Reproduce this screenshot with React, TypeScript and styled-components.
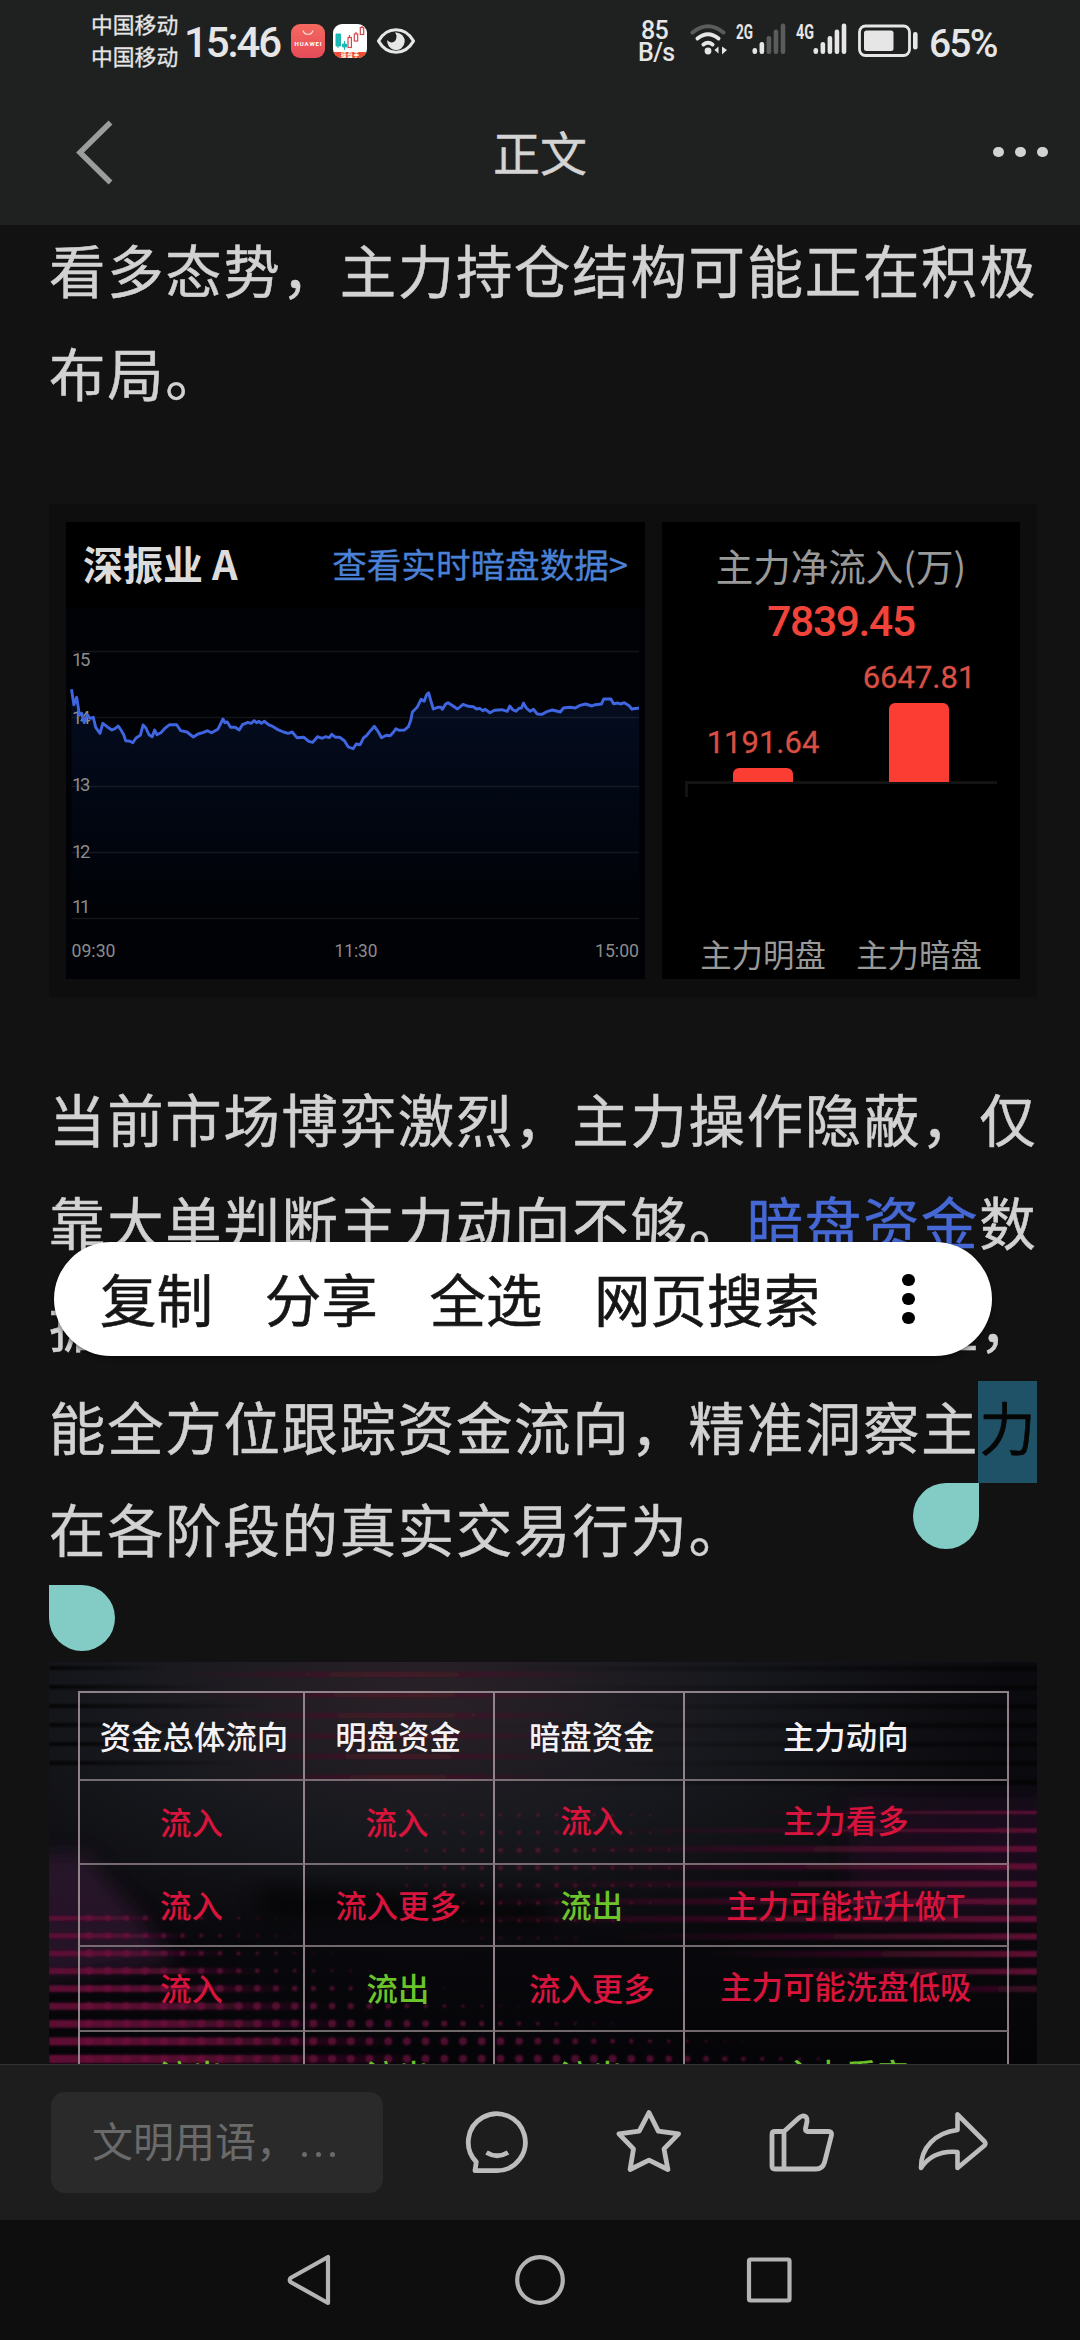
import React from "react";
import styled, { createGlobalStyle, css } from "styled-components";

const cjk = `"Noto Sans CJK SC", sans-serif`;
const latin = `Roboto, "Noto Sans CJK SC", sans-serif`;

const Global = createGlobalStyle`
  * { box-sizing: border-box; }
  body { margin: 0; background: #121212; font-family: ${cjk}; }
  svg { display: block; }
`;

const Screen = styled.div`
  position: relative;
  width: 1080px;
  height: 2340px;
  display: flex;
  flex-direction: column;
  overflow: hidden;
  background: #121212;
`;

/* ---------- header ---------- */

const Header = styled.header`
  flex: none;
  height: 225px;
  background: #1f2120;
  display: flex;
  flex-direction: column;
`;

const StatusBar = styled.div`
  height: 82px;
  display: flex;
  justify-content: space-between;
  padding: 0 85px 0 91px;
  color: #e6e6e6;
`;

const StatusSide = styled.div`
  display: flex;
  align-items: center;
  height: 82px;
`;

const Carriers = styled.div`
  display: flex;
  flex-direction: column;
  width: 93px;
  font-size: 21.8px;
  line-height: 32px;
  white-space: nowrap;
  padding-bottom: 3px;
  -webkit-text-stroke: 0.3px currentColor;
`;

const Clock = styled.div`
  width: 107px;
  font: 500 42px/50px ${latin};
  letter-spacing: -2.1px;
  padding-top: 4px;
`;

const AppBadge = styled.div<{ $gap: number }>`
  width: 34px;
  height: 34px;
  border-radius: 9px;
  overflow: hidden;
  margin-right: ${(p) => p.$gap}px;
`;

const NetSpeed = styled.div`
  width: 52px;
  font: 500 25px/22px ${latin};
  letter-spacing: -0.6px;
  display: flex;
  flex-direction: column;
  padding-top: 2px;
`;

const SpeedLine = styled.span<{ $indent?: number }>`
  padding-left: ${(p) => p.$indent || 0}px;
`;

const Percent = styled.div`
  width: 66px;
  font: 500 39px/46px ${latin};
  letter-spacing: -1.8px;
  padding-top: 5px;
  white-space: nowrap;
`;

const TitleBar = styled.div`
  flex: 1;
  display: grid;
  grid-template-columns: 200px 1fr 200px;
  align-items: center;
  padding-bottom: 3px;
`;

const Title = styled.h1`
  margin: 0;
  padding-bottom: 2px;
  font: 400 47px/60px ${cjk};
  text-align: center;
  color: #d4d4d4;
  -webkit-text-stroke: 0.4px currentColor;
`;

/* ---------- article ---------- */

const Article = styled.main`
  flex: none;
  height: 1839px;
  overflow: hidden;
  padding: 0 43px 0 49px;
`;

const Paragraph = styled.div<{ $top: number }>`
  margin-top: ${(p) => p.$top}px;
  font-size: 56.4px;
  letter-spacing: 1.75px;
  color: #d2d2d2;
  -webkit-text-stroke: 0.5px currentColor;
`;

const Line = styled.div`
  height: 102.5px;
  line-height: 102.5px;
  white-space: nowrap;
`;

const Keyword = styled.span`
  color: #4668d4;
`;

const Selected = styled.span`
  position: relative;
  display: inline-block;
  color: #060606;
  isolation: isolate;
  &::before {
    content: "";
    position: absolute;
    z-index: -1;
    left: -1px;
    top: 6px;
    width: 59px;
    height: 102px;
    background: #1f5266;
  }
`;

const Handle = styled.span<{ $side: "start" | "end" }>`
  position: absolute;
  width: 66px;
  height: 66px;
  background: #82ccc5;
  ${(p) =>
    p.$side === "start"
      ? css`
          left: 913px;
          top: 1483px;
          border-radius: 33px 0 33px 33px;
        `
      : css`
          left: 49px;
          top: 1585px;
          border-radius: 0 33px 33px 33px;
        `}
`;

/* ---------- stock card ---------- */

const StockCard = styled.section`
  margin-top: 81px;
  height: 493px;
  padding: 18px 17px;
  display: flex;
  gap: 17px;
  background: #0e0e0e;
`;

const PricePanel = styled.div`
  width: 579px;
  height: 457px;
  background: #000;
  display: flex;
  flex-direction: column;
`;

const PriceHead = styled.div`
  height: 86px;
  display: flex;
  justify-content: space-between;
  align-items: center;
  padding: 0 17px 4px 17px;
`;

const StockName = styled.div`
  font: 700 40px/50px ${cjk};
  color: #dcdcdc;
`;

const LiveLink = styled.div`
  font: 400 34.6px/50px ${cjk};
  color: #4a80d6;
  -webkit-text-stroke: 0.3px currentColor;
`;

const Plot = styled.svg`
  width: 579px;
  height: 371px;
  font-family: ${latin};
  font-size: 18.5px;
  fill: #8c8c8c;
`;

const FlowPanel = styled.div`
  width: 358px;
  height: 457px;
  background: #000;
  display: flex;
  flex-direction: column;
  align-items: center;
  padding-top: 18px;
`;

const FlowTitle = styled.div`
  font: 400 37.5px/50px ${cjk};
  color: #999;
`;

const FlowTotal = styled.div`
  margin-top: 7px;
  font: 500 42.5px/50px ${latin};
  letter-spacing: -1.3px;
  color: #f0443b;
`;

const Bars = styled.div`
  margin-top: 8px;
  width: 312px;
  height: 129px;
  display: grid;
  grid-template-columns: 1fr 1fr;
  align-items: end;
  border-bottom: 3px solid #131313;
`;

const BarColumn = styled.div`
  display: flex;
  flex-direction: column;
  align-items: center;
  margin-bottom: -1px;
`;

const BarValue = styled.div`
  font: 400 31px/36px ${latin};
  color: #d94f44;
  margin-bottom: 7px;
  -webkit-text-stroke: 0.3px currentColor;
`;

const Bar = styled.div`
  width: 60px;
  background: #fc3d33;
  border-radius: 6px 6px 0 0;
`;

const AxisTick = styled.div`
  align-self: flex-start;
  margin-left: 23px;
  width: 3px;
  height: 13px;
  background: #131313;
`;

const BarLabels = styled.div`
  margin-top: auto;
  width: 312px;
  display: grid;
  grid-template-columns: 1fr 1fr;
  text-align: center;
  font: 400 31.4px/44px ${cjk};
  color: #999;
  padding-bottom: 3px;
`;

/* ---------- flow table ---------- */

const TableFigure = styled.section`
  position: relative;
  margin-top: 82.5px;
  height: 440px;
  padding: 28.5px 29px;
  background: #111217;
  overflow: hidden;
`;

const Backdrop = styled.svg`
  position: absolute;
  left: 0;
  top: 0;
`;

const Grid = styled.div`
  position: relative;
  display: grid;
  grid-template-columns: 225px 190px 189.5px 324.5px;
  grid-template-rows: 88px 84.5px 82px 84.5px 89px;
  width: 931px;
  border-left: 2px solid rgba(165, 150, 156, 0.85);
  border-top: 2px solid rgba(165, 150, 156, 0.85);
`;

type Tone = "head" | "in" | "out";
const tones: Record<Tone, string> = { head: "#f4f2f4", in: "#d8143d", out: "#6cc42b" };

const Cell = styled.div<{ $tone: Tone; $dx: number; $dy: number }>`
  display: flex;
  align-items: center;
  justify-content: center;
  padding-left: ${(p) => Math.max(0, p.$dx * 2)}px;
  padding-right: ${(p) => Math.max(0, -p.$dx * 2)}px;
  padding-bottom: ${(p) => p.$dy * 2}px;
  border-right: 2px solid rgba(165, 150, 156, 0.85);
  border-bottom: 2px solid rgba(150, 138, 142, 0.75);
  font: 500 31.4px/40px ${cjk};
  white-space: nowrap;
  color: ${(p) => tones[p.$tone]};
`;

/* ---------- floating menu ---------- */

const ContextMenu = styled.div`
  position: absolute;
  left: 54px;
  top: 1242px;
  width: 938px;
  height: 114px;
  border-radius: 57px;
  background: #fff;
  display: flex;
  align-items: center;
  padding: 0 77px 0 46px;
  gap: 51.7px;
  font: 400 56.5px/80px ${cjk};
  color: #161616;
  white-space: nowrap;
  box-shadow: 0 2px 4px rgba(0, 0, 0, 0.5);
  -webkit-text-stroke: 0.6px currentColor;
`;

const MenuItem = styled.span`
  padding-bottom: 4px;
`;

const MoreDots = styled.span`
  margin-left: auto;
  display: flex;
  flex-direction: column;
  gap: 6.4px;
`;

const Dot = styled.i<{ $size: number; $color: string }>`
  width: ${(p) => p.$size}px;
  height: ${(p) => p.$size}px;
  border-radius: 50%;
  background: ${(p) => p.$color};
`;

const HeaderDots = styled.div`
  display: flex;
  gap: 11.5px;
  justify-self: end;
  margin: 0 32px 0 0;
`;

/* ---------- bottom bars ---------- */

const ActionBar = styled.footer`
  height: 156px;
  flex: none;
  background: #1d1d1d;
  border-top: 1px solid #333;
  display: flex;
  padding: 27px 0 0 51px;
`;

const CommentBox = styled.div`
  width: 332px;
  height: 101px;
  border-radius: 14px;
  background: #2a2a2a;
  padding-left: 41px;
  font: 400 41px/94px ${cjk};
  color: #6a6a6a;
  display: flex;
  white-space: pre;
`;

const Ellipsis = styled.span`
  display: flex;
  gap: 9px;
  padding: 60px 0 0 5px;
`;

const Actions = styled.svg`
  margin: -27px 0 0 57px;
`;

const SystemNav = styled.nav`
  height: 120px;
  flex: none;
  background: #0e0e0e;
`;

/* ---------- data ---------- */

const pricePoints =
  "80,568 86,614 93,592 100,645 106,640 112,668 120,645 127,655 135,652 141,682 152,700 159,670 170,680 182,690 190,686 198,678 205,690 212,704 217,722 228,724 235,728 243,714 254,706 261,675 268,684 276,704 284,710 290,690 296,704 306,698 315,686 328,674 346,674 356,692 372,696 388,711 400,702 414,697 424,692 434,698 450,688 463,657 468,668 474,666 482,682 494,682 504,690 512,674 526,667 534,670 542,662 548,668 554,664 560,670 568,664 578,674 590,680 600,688 616,696 628,700 638,696 650,713 668,712 680,724 690,727 702,710 714,715 722,710 732,713 738,703 748,712 758,712 770,722 780,741 792,746 800,732 810,734 818,714 826,707 836,692 846,679 856,696 864,713 876,706 886,707 896,694 900,686 908,691 922,690 932,680 938,660 942,636 954,622 964,598 972,604 978,584 983,578 988,600 995,627 1006,622 1014,622 1018,628 1026,612 1032,608 1044,617 1056,627 1070,613 1084,619 1096,620 1104,627 1112,625 1120,632 1126,628 1138,638 1150,631 1168,629 1182,634 1188,618 1196,629 1204,634 1212,625 1218,624 1223,609 1230,624 1240,634 1248,628 1258,642 1270,643 1284,634 1296,630 1316,636 1324,624 1340,622 1354,624 1364,617 1380,612 1396,618 1404,614 1420,612 1426,597 1444,597 1451,611 1462,609 1468,612 1478,608 1490,617 1497,627 1515,624"
    .split(" ")
    .map((pair) => {
      const [x, y] = pair.split(",").map(Number);
      return `${((x - 66) / 2.529).toFixed(1)},${((y - 324) / 3).toFixed(1)}`;
    })
    .join(" ");

const gridLines = [43.5, 109.5, 178.5, 244.5, 310.5];
const priceLabels: [string, number][] = [
  ["15", 58],
  ["14", 116],
  ["13", 183],
  ["12", 250],
  ["11", 305],
];

const flows = [
  { name: "主力明盘", value: "1191.64", height: 14 },
  { name: "主力暗盘", value: "6647.81", height: 79 },
];

type CellData = [string, Tone, number?, number?];
const rows: CellData[][] = [
  [["资金总体流向", "head", 2.5, 0], ["明盘资金", "head", -1, 0], ["暗盘资金", "head", 3, 0], ["主力动向", "head", 0, 0]],
  [["流入", "in"], ["流入", "in", -2], ["流入", "in", 3, 2], ["主力看多", "in", 0, 2]],
  [["流入", "in"], ["流入更多", "in", -1], ["流出", "out", 3], ["主力可能拉升做T", "in", 0]],
  [["流入", "in"], ["流出", "out", -1], ["流入更多", "in", 3], ["主力可能洗盘低吸", "in", 0, 2]],
  [["流出", "out"], ["流出", "out", -1], ["流出", "out", 3], ["主力看空", "out", 0, 1.5]],
];

/* ---------- drawings ---------- */

const SignalBars = ({ x, active }: { x: number; active: number }) => (
  <g>
    {[6, 12, 18, 24.5, 30.5].map((h, i) => (
      <rect key={i} x={x + i * 7.05} y={31 - h} width="4.6" height={h} rx="2.2" fill={i < active ? "#e6e6e6" : "#5a5b5b"} />
    ))}
  </g>
);

const StatusIcons = () => (
  <svg width="239" height="36" viewBox="0 0 239 36" fill="none" fontFamily="Roboto" fontWeight="700" fontSize="19.5">
    <g strokeLinecap="round" strokeWidth="4">
      <path d="M2.5 9.5Q18 -3 33.500 9.5" stroke="#5a5b5b" />
      <path d="M7.500 15.500Q18 7 28.500 15.500" stroke="#e6e6e6" />
      <path d="M13.500 21.500Q18 18 22.500 21.500" stroke="#e6e6e6" />
    </g>
    <circle cx="18" cy="28" r="3.4" fill="#e6e6e6" />
    <path d="M24.500 27l4-3.500v7zM30 24v8M37 27l-5-3.500v8z" fill="#e6e6e6" />
    <text x="46" y="15.500" fill="#e6e6e6" textLength="17" lengthAdjust="spacingAndGlyphs">2G</text>
    <SignalBars x={62.5} active={2} />
    <text x="106" y="15.500" fill="#e6e6e6" textLength="18" lengthAdjust="spacingAndGlyphs">4G</text>
    <SignalBars x={123.500} active={5} />
    <rect x="169.500" y="3" width="50" height="29.500" rx="6" stroke="#e6e6e6" strokeWidth="2.800" />
    <rect x="174" y="7.500" width="29.500" height="20.500" rx="2.500" fill="#e6e6e6" />
    <rect x="223" y="9" width="4.600" height="17.500" rx="2.200" fill="#e6e6e6" />
  </svg>
);

const StoreLogo = () => (
  <svg width="34" height="34" viewBox="0 0 34 34">
    <defs>
      <linearGradient id="store" x1="0" y1="0" x2="0" y2="1">
        <stop offset="0" stopColor="#f4695f" />
        <stop offset="1" stopColor="#e64b58" />
      </linearGradient>
    </defs>
    <rect width="34" height="34" fill="url(#store)" />
    <path d="M12 6.500a5.200 5.200 0 0 0 10 0" fill="none" stroke="#ffd9d6" strokeWidth="1.200" />
    <text x="3.600" y="21.800" fontFamily="Roboto" fontWeight="700" fontSize="6" fill="#fff" textLength="27">HUAWEI</text>
  </svg>
);

const StockLogo = () => (
  <svg width="34" height="34" viewBox="0 0 34 34">
    <rect width="34" height="34" fill="#fff" />
    <path d="M3 10h4.500v12H3zM5 22v2M11.500 17v9M9.500 20h4v3h-4z" fill="#1bb8b4" stroke="#1bb8b4" strokeWidth="1" />
    <g fill="#fff" stroke="#d4484e" strokeWidth="1.200">
      <path d="M16.500 11v2.500M23 8v2M29 2v2" />
      <rect x="15" y="13.500" width="3.400" height="10" />
      <rect x="21.300" y="10" width="3.400" height="7" />
      <rect x="27.300" y="3.500" width="3.400" height="7" />
    </g>
    <rect y="28" width="34" height="6" fill="#ee4a35" />
    <text x="8" y="33" fontFamily="Noto Sans CJK SC" fontWeight="700" fontSize="5.500" fill="#fff" textLength="18">操盘手</text>
  </svg>
);

const EyeIcon = () => (
  <svg width="40" height="30" viewBox="0 0 40 30">
    <path d="M2.500 15C11 0 29 0 37.500 15C29 30 11 30 2.500 15Z" fill="none" stroke="#e6e6e6" strokeWidth="3.200" strokeLinejoin="round" />
    <path d="M20.500 6.500a8.800 8.800 0 1 1-9.300 7.500c2.500 3.500 7 3 8.600-.3c1.300-2.600 .8-5.200-.8-7.100z" fill="#e6e6e6" />
  </svg>
);

const PricePlot = () => (
  <Plot viewBox="0 0 579 371">
    <defs>
      <linearGradient id="area" x1="0" y1="0" x2="0" y2="1">
        <stop offset="0" stopColor="#050d20" />
        <stop offset="0.45" stopColor="#020714" />
        <stop offset="1" stopColor="#000205" />
      </linearGradient>
    </defs>
    <rect width="579" height="371" fill="#000205" />
    <polygon points={`5.5,310 ${pricePoints} 573,310`} fill="url(#area)" />
    {gridLines.map((y) => (
      <line key={y} x1="5.500" x2="573" y1={y} y2={y} stroke="#fff" strokeOpacity="0.080" strokeWidth="1.300" />
    ))}
    {priceLabels.map(([t, y]) => (
      <text key={t} x="6" y={y} textLength="18.500">{t}</text>
    ))}
    <polyline points={pricePoints} fill="none" stroke="#3f66e0" strokeWidth="2.900" strokeLinejoin="round" />
    <text x="5.500" y="349" textLength="44" lengthAdjust="spacingAndGlyphs">09:30</text>
    <text x="268.500" y="349" textLength="43" lengthAdjust="spacingAndGlyphs">11:30</text>
    <text x="529" y="349" textLength="44" lengthAdjust="spacingAndGlyphs">15:00</text>
  </Plot>
);

const TableBackdrop = () => {
  const pitch = 17.6;
  const dots: React.ReactNode[] = [];
  for (let r = 0; r < 9; r++) {
    const y = 256 + r * pitch;
    const reach = 290 + r * r * 8;
    for (let c = 0; c < 40; c++) {
      const x = 40 + c * 18.7;
      const radius = Math.min(4, (reach - x) / 75 + r * 0.12);
      if (radius > 0.6) dots.push(<circle key={`l${r}-${c}`} cx={x} cy={y} r={radius} fill="#701040" opacity={0.68} />);
    }
  }
  for (let r = 0; r < 8; r++) {
    const y = 153 + r * pitch;
    for (let c = 0; c < 16; c++) {
      const x = 358 + c * 18.7;
      const d = Math.hypot((x - 480) / 140, (y - 200) / 75);
      if (d < 1.1) dots.push(<circle key={`m${r}-${c}`} cx={x} cy={y} r={2.9 - d * 1.6} fill="#7a1236" opacity={0.55} />);
    }
  }
  return (
    <Backdrop width="988" height="440" viewBox="0 0 988 440">
      <defs>
        <radialGradient id="grey" cx="0.38" cy="0.08" r="0.6">
          <stop offset="0" stopColor="#2a2128" />
          <stop offset="0.5" stopColor="#18191e" />
          <stop offset="1" stopColor="#0b0b0f" />
        </radialGradient>
        <linearGradient id="fadeR" x1="0" x2="1" y1="0" y2="0">
          <stop offset="0" stopColor="#600e34" />
          <stop offset="0.4" stopColor="#600e34" stopOpacity="0.85" />
          <stop offset="1" stopColor="#600e34" stopOpacity="0" />
        </linearGradient>
        <linearGradient id="fadeL" x1="0" x2="1" y1="0" y2="0">
          <stop offset="0" stopColor="#620e32" stopOpacity="0" />
          <stop offset="0.6" stopColor="#620e32" stopOpacity="0.55" />
          <stop offset="1" stopColor="#620f34" />
        </linearGradient>
        <linearGradient id="mid" x1="0" x2="1" y1="0" y2="0">
          <stop offset="0" stopColor="#5a1026" stopOpacity="0" />
          <stop offset="0.5" stopColor="#5a1026" stopOpacity="0.6" />
          <stop offset="1" stopColor="#5a1026" stopOpacity="0" />
        </linearGradient>
        <linearGradient id="darkL" x1="0" x2="1" y1="0" y2="0">
          <stop offset="0" stopColor="#000" stopOpacity="0.75" />
          <stop offset="1" stopColor="#000" stopOpacity="0" />
        </linearGradient>
        <linearGradient id="darkR" x1="0" x2="1" y1="0" y2="0">
          <stop offset="0" stopColor="#000" stopOpacity="0" />
          <stop offset="1" stopColor="#000" stopOpacity="0.6" />
        </linearGradient>
        <linearGradient id="floor" x1="0" x2="0" y1="0" y2="1">
          <stop offset="0" stopColor="#030306" stopOpacity="0" />
          <stop offset="1" stopColor="#030306" stopOpacity="0.9" />
        </linearGradient>
        <filter id="soft" x="-30%" y="-30%" width="160%" height="160%">
          <feGaussianBlur stdDeviation="10" />
        </filter>
        <filter id="smooth"><feGaussianBlur stdDeviation="0.9" /></filter>
      </defs>
      <rect width="988" height="440" fill="url(#grey)" />
      <rect y="200" width="988" height="240" fill="url(#floor)" />
      <path d="M-20 192L35 192L90 255L125 300L-20 320Z" fill="#3c1a3c" opacity="0.55" filter="url(#soft)" />
      <path d="M210 225L500 240L500 262L210 255Z" fill="#020205" opacity="0.6" filter="url(#soft)" />
      <rect x="800" y="135" width="220" height="120" fill="#2a0c2c" opacity="0.45" filter="url(#soft)" />
      <g filter="url(#smooth)">
        {Array.from({ length: 6 }, (_, i) => (
          <rect key={i} x="0" y={4 + i * 19} width={[120, 170, 220, 150, 240, 200][i]} height="4" fill="url(#darkL)" />
        ))}
        {Array.from({ length: 7 }, (_, i) => (
          <rect key={i} x={430 + (i % 3) * 60} y={4 + i * 19} width={560 - (i % 3) * 60} height="5" fill="url(#darkR)" />
        ))}
        {Array.from({ length: 6 }, (_, i) => (
          <rect key={i} x={130 + i * 12} y={10 + i * 20.5} width={430 - i * 22} height="5" fill="url(#mid)" />
        ))}
        {Array.from({ length: 9 }, (_, i) => (
          <rect key={i} x="0" y={256 + i * pitch - 2 - i * 0.25} width={110 + i * 34} height={4.5 + i * 0.5} fill="url(#fadeR)" />
        ))}
        {Array.from({ length: 11 }, (_, i) => {
          const x = [700, 560, 520, 500, 480, 400, 380, 560, 660, 700, 800][i];
          return <rect key={i} x={x} y={152 + i * 17.5 - 3} width={988 - x} height={[3, 4, 6, 6, 6, 6, 6, 6, 6, 6, 6][i]} fill="url(#fadeL)" opacity={i > 9 ? 0.6 : 1} />;
        })}
        {dots}
      </g>
    </Backdrop>
  );
};

const ActionIcons = () => (
  <Actions width="640" height="155" viewBox="440 2065 640 155" fill="none" stroke="#bdbdbd" strokeWidth="4.800" strokeLinejoin="round">
    <path d="M476.300 2162A28.500 28.500 0 1 1 497.200 2170.700H475l1.300-8.700Z" />
    <path d="M486.500 2152.500q10.500 6.500 21.500 0" />
    <path d="M649 2112.500l9.300 18.600 20.300 2.700-14.600 15.100 3.900 20.600-18.900-9.300-18.900 9.300 3.400-20.600-14.600-15.100 20.300-2.700z" />
    <path d="M784 2131.500h-9q-3 0-3 3v31.500q0 3 3 3h41q6.500 0 8.500-6.500l7-27.500q.5-3.500-3-3.500h-21q-2.500 0-2-3l1.500-7q.5-6-4.500-5.500-2 .3-4 2.300zM784 2131.500v37.500" />
    <path d="M957.500 2114.500v15.500c-22 2.500-37 18-36.500 38 7-10.500 19-17.500 36.500-16v16l27-22.500q1.700-2 0-4z" strokeWidth="4.600" />
  </Actions>
);

export default function App() {
  return (
    <>
      <Global />
      <Screen>
        <Header>
          <StatusBar>
            <StatusSide>
              <Carriers>
                <span>中国移动</span>
                <span>中国移动</span>
              </Carriers>
              <Clock>15:46</Clock>
              <AppBadge $gap={8}><StoreLogo /></AppBadge>
              <AppBadge $gap={9}><StockLogo /></AppBadge>
              <EyeIcon />
            </StatusSide>
            <StatusSide>
              <NetSpeed>
                <SpeedLine $indent={3}>85</SpeedLine>
                <SpeedLine>B/s</SpeedLine>
              </NetSpeed>
              <StatusIcons />
              <Percent>65%</Percent>
            </StatusSide>
          </StatusBar>
          <TitleBar>
            <svg width="200" height="80" viewBox="0 113 200 80" fill="none" stroke="#9c9c9c" strokeWidth="5.500">
              <path d="M110.500 123.500L80 153.500l30.500 30" />
            </svg>
            <Title>正文</Title>
            <HeaderDots>
              {[0, 1, 2].map((i) => <Dot key={i} $size={10.6} $color="#d2d2d2" />)}
            </HeaderDots>
          </TitleBar>
        </Header>

        <Article>
          <Paragraph $top={-7}>
            <Line>看多态势，主力持仓结构可能正在积极</Line>
            <Line>布局。</Line>
          </Paragraph>

          <StockCard>
            <PricePanel>
              <PriceHead>
                <StockName>深振业 A</StockName>
                <LiveLink>查看实时暗盘数据&gt;</LiveLink>
              </PriceHead>
              <PricePlot />
            </PricePanel>
            <FlowPanel>
              <FlowTitle>主力净流入(万)</FlowTitle>
              <FlowTotal>7839.45</FlowTotal>
              <Bars>
                {flows.map((f) => (
                  <BarColumn key={f.name}>
                    <BarValue>{f.value}</BarValue>
                    <Bar style={{ height: f.height }} />
                  </BarColumn>
                ))}
              </Bars>
              <AxisTick />
              <BarLabels>
                {flows.map((f) => <span key={f.name}>{f.name}</span>)}
              </BarLabels>
            </FlowPanel>
          </StockCard>

          <Paragraph $top={70}>
            <Line>当前市场博弈激烈，主力操作隐蔽，仅</Line>
            <Line>靠大单判断主力动向不够。<Keyword>暗盘资金</Keyword>数</Line>
            <Line>据能弥补该缺陷，助你看清市场机理，</Line>
            <Line>能全方位跟踪资金流向，精准洞察主<Selected>力</Selected></Line>
            <Line>在各阶段的真实交易行为。</Line>
          </Paragraph>

          <TableFigure>
            <TableBackdrop />
            <Grid>
              {rows.flatMap((row, r) =>
                row.map(([text, tone, dx = 0, dy = 0], c) => (
                  <Cell key={`${r}-${c}`} $tone={tone} $dx={dx} $dy={dy}>{text}</Cell>
                ))
              )}
            </Grid>
          </TableFigure>
        </Article>

        <ActionBar>
          <CommentBox>
            文明用语，
            <Ellipsis>
              {[0, 1, 2].map((i) => <Dot key={i} $size={5} $color="#6a6a6a" />)}
            </Ellipsis>
          </CommentBox>
          <ActionIcons />
        </ActionBar>
        <SystemNav>
          <svg width="1080" height="120" viewBox="0 0 1080 120" fill="none" stroke="#b4b4b4" strokeWidth="4.200" strokeLinejoin="round">
            <path d="M328 37v46L290.500 62q-1.500-2 0-4z" />
            <circle cx="540" cy="60" r="22.800" />
            <rect x="749" y="39.500" width="40.500" height="41" rx="1.500" />
          </svg>
        </SystemNav>

        <Handle $side="start" />
        <Handle $side="end" />
        <ContextMenu>
          <MenuItem>复制</MenuItem>
          <MenuItem>分享</MenuItem>
          <MenuItem>全选</MenuItem>
          <MenuItem>网页搜索</MenuItem>
          <MoreDots>
            {[0, 1, 2].map((i) => <Dot key={i} $size={12.6} $color="#000" />)}
          </MoreDots>
        </ContextMenu>
      </Screen>
    </>
  );
}
